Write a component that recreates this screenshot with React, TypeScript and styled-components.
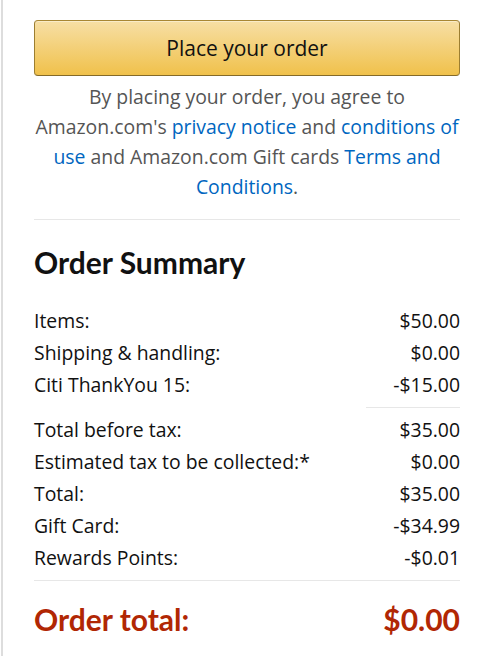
import styled, { createGlobalStyle } from "styled-components";

const GlobalStyle = createGlobalStyle`
  html, body {
    margin: 0;
    padding: 0;
    background: #fff;
  }
  body {
    font-family: "Open Sans", "Liberation Sans", sans-serif;
    color: #111;
  }
`;

const Panel = styled.div`
  box-sizing: border-box;
  min-height: 100vh;
  margin-left: 1px;
  border-left: 2px solid #dddddd;
  padding: 20px 32px 0 31px;
`;

const OrderButton = styled.button`
  display: block;
  box-sizing: border-box;
  width: 100%;
  height: 56px;
  border: 1px solid;
  border-color: #a88734 #9c7e31 #846a29;
  border-radius: 4px;
  background: linear-gradient(to bottom, #f7dfa5, #f0c14b);
  box-shadow: inset 0 1px 0 rgba(255, 255, 255, 0.4);
  font-family: inherit;
  font-size: 21px;
  font-weight: 500;
  color: #111;
  cursor: pointer;
`;

const Legal = styled.p`
  margin: 6px 0 0;
  font-size: 19.4px;
  font-weight: 500;
  line-height: 30px;
  text-align: center;
  color: #555;
`;

const Link = styled.a`
  color: #0066c0;
  text-decoration: none;
`;

const Divider = styled.hr<{ $short?: boolean; $top: number; $bottom: number }>`
  border: 0;
  height: 1px;
  background: #e7e7e7;
  width: ${(p) => (p.$short ? "94px" : "100%")};
  margin: ${(p) => p.$top}px 0 ${(p) => p.$bottom}px auto;
`;

const Title = styled.h2`
  margin: 0 0 25px;
  font-family: Lato, "Open Sans", sans-serif;
  font-size: 30px;
  line-height: 36px;
  font-weight: 700;
`;

const Row = styled.div`
  display: flex;
  justify-content: space-between;
  font-size: 19.4px;
  font-weight: 500;
  line-height: 32px;
`;

const TotalRow = styled.div`
  display: flex;
  justify-content: space-between;
  font-family: Lato, "Open Sans", sans-serif;
  font-size: 30px;
  line-height: 36px;
  font-weight: 700;
  color: #b12704;
`;

const firstLines = [
  ["Items:", "$50.00"],
  ["Shipping & handling:", "$0.00"],
  ["Citi ThankYou 15:", "-$15.00"],
];

const secondLines = [
  ["Total before tax:", "$35.00"],
  ["Estimated tax to be collected:*", "$0.00"],
  ["Total:", "$35.00"],
  ["Gift Card:", "-$34.99"],
  ["Rewards Points:", "-$0.01"],
];

export default function App() {
  return (
    <>
      <GlobalStyle />
      <Panel>
        <OrderButton>Place your order</OrderButton>
        <Legal>
          By placing your order, you agree to Amazon.com's{" "}
          <Link href="#">privacy notice</Link> and{" "}
          <Link href="#">conditions of use</Link> and Amazon.com Gift cards{" "}
          <Link href="#">Terms and Conditions</Link>.
        </Legal>
        <Divider $top={17} $bottom={24} />
        <Title>Order Summary</Title>
        {firstLines.map(([label, value]) => (
          <Row key={label}>
            <span>{label}</span>
            <span>{value}</span>
          </Row>
        ))}
        <Divider $short $top={6} $bottom={6} />
        {secondLines.map(([label, value]) => (
          <Row key={label}>
            <span>{label}</span>
            <span>{value}</span>
          </Row>
        ))}
        <Divider $top={6} $bottom={20} />
        <TotalRow>
          <span>Order total:</span>
          <span>$0.00</span>
        </TotalRow>
      </Panel>
    </>
  );
}
